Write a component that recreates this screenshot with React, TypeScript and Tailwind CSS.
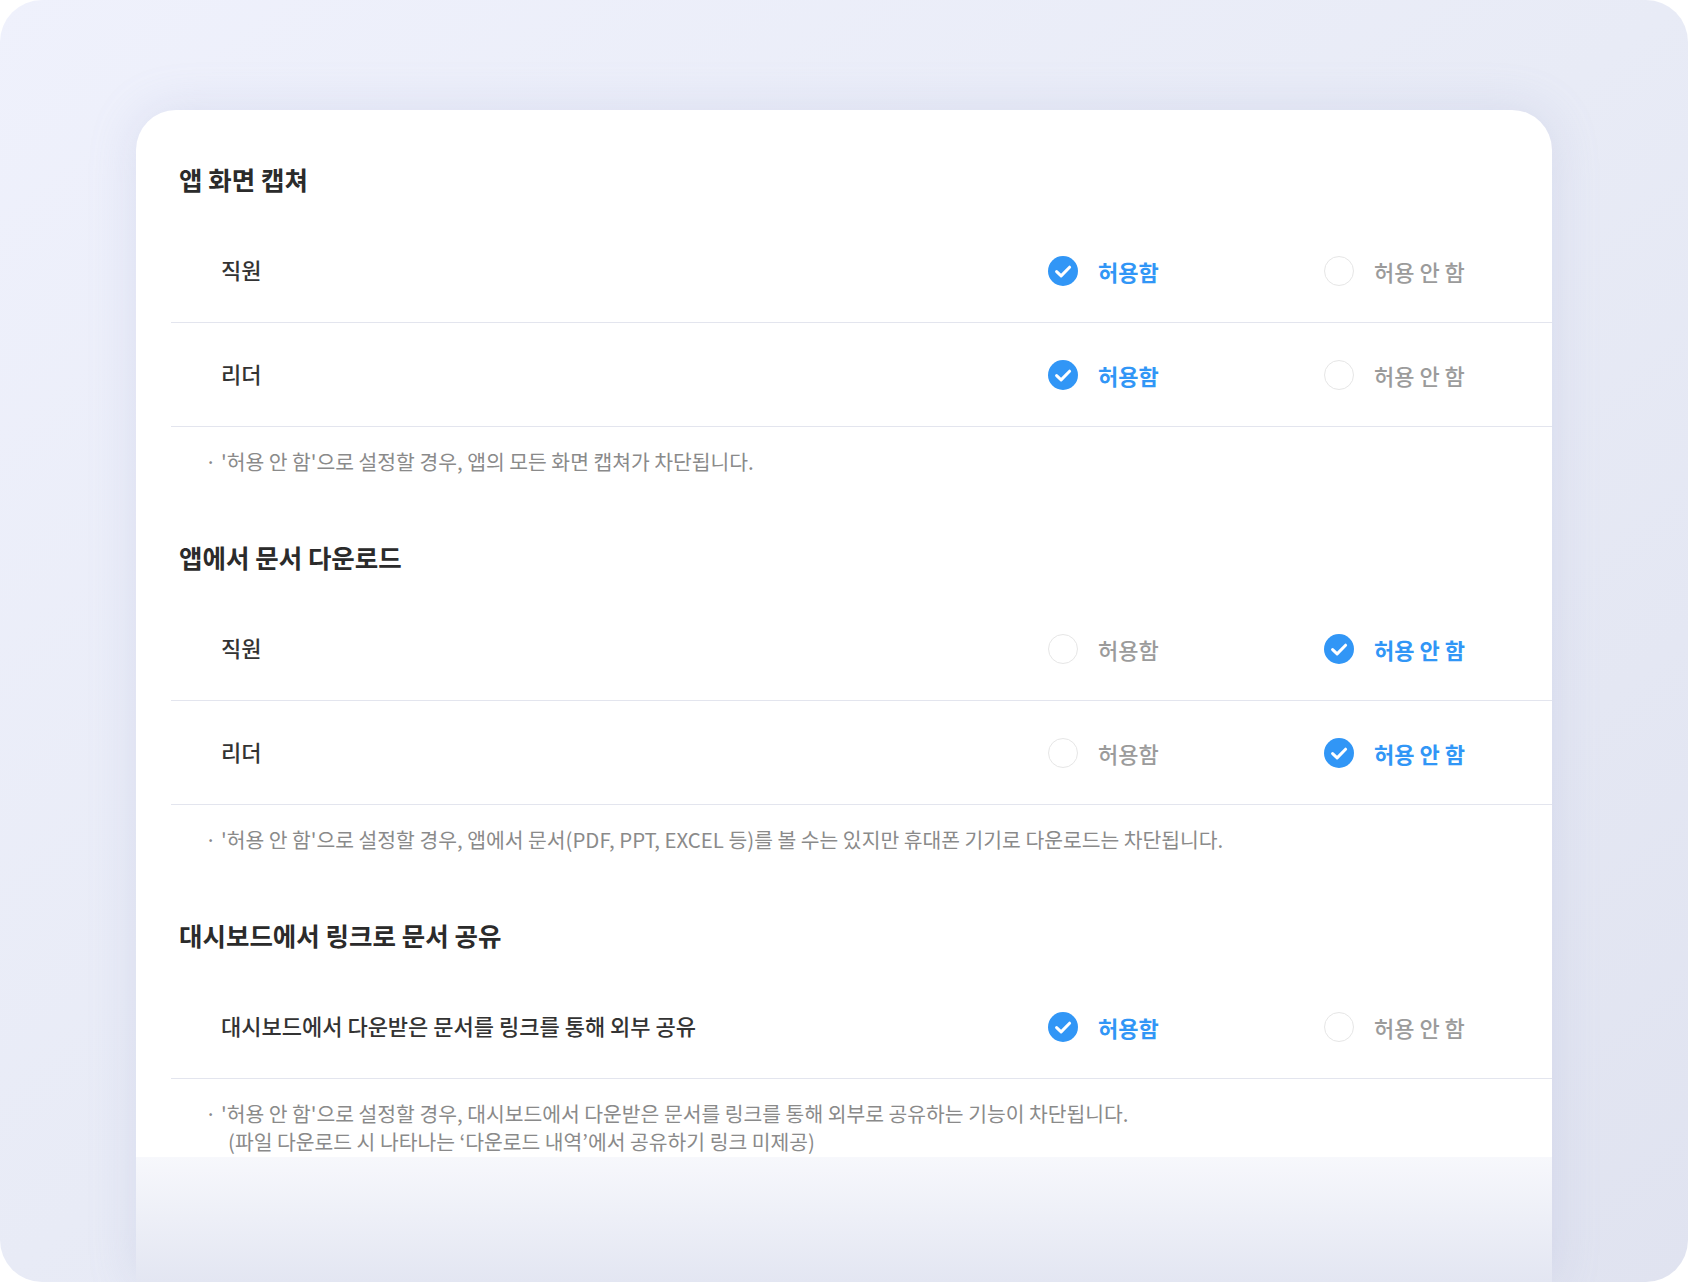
type Row = { label: string; allow: boolean };
type Section = { title: string; rows: Row[]; notes: string[] };

const sections: Section[] = [
  {
    title: '앱 화면 캡쳐',
    rows: [
      { label: '직원', allow: true },
      { label: '리더', allow: true },
    ],
    notes: ["· '허용 안 함'으로 설정할 경우, 앱의 모든 화면 캡쳐가 차단됩니다."],
  },
  {
    title: '앱에서 문서 다운로드',
    rows: [
      { label: '직원', allow: false },
      { label: '리더', allow: false },
    ],
    notes: [
      "· '허용 안 함'으로 설정할 경우, 앱에서 문서(PDF, PPT, EXCEL 등)를 볼 수는 있지만 휴대폰 기기로 다운로드는 차단됩니다.",
    ],
  },
  {
    title: '대시보드에서 링크로 문서 공유',
    rows: [{ label: '대시보드에서 다운받은 문서를 링크를 통해 외부 공유', allow: true }],
    notes: [
      "· '허용 안 함'으로 설정할 경우, 대시보드에서 다운받은 문서를 링크를 통해 외부로 공유하는 기능이 차단됩니다.",
      '(파일 다운로드 시 나타나는 ‘다운로드 내역’에서 공유하기 링크 미제공)',
    ],
  },
];

function RadioMark({ checked }: { checked: boolean }) {
  if (!checked) {
    return <span className="w-[30px] h-[30px] rounded-full border-[1.5px] border-[#e6e6e6] bg-white shrink-0" />;
  }
  return (
    <svg width="30" height="30" viewBox="0 0 30 30" className="shrink-0">
      <circle cx="15" cy="15" r="15" fill="#3196f6" />
      <path
        d="M8.6 15.6 L13.1 19.9 L21.6 11.2"
        fill="none"
        stroke="#ffffff"
        strokeWidth="3"
        strokeLinecap="round"
        strokeLinejoin="round"
      />
    </svg>
  );
}

function Option({ label, checked }: { label: string; checked: boolean }) {
  return (
    <div className="flex items-center gap-[20px]">
      <RadioMark checked={checked} />
      <span
        className={
          checked
            ? 'text-[22px] leading-[30px] font-bold text-[#3196f6]'
            : 'text-[22px] leading-[30px] font-medium text-[#9b9b9b]'
        }
      >
        {label}
      </span>
    </div>
  );
}

export default function App() {
  return (
    <div className="w-[1688px] h-[1282px] bg-white font-['Noto_Sans_CJK_KR','Noto_Sans',sans-serif]">
      <div className="h-full rounded-[42px] bg-linear-to-br from-[#eff1fc] via-[#e8ebf6] to-[#e0e3f0] overflow-hidden px-[136px] pt-[110px]">
        <div className="relative h-full rounded-t-[40px] bg-white shadow-[0_0_48px_rgba(150,160,205,0.22)] overflow-hidden pl-[35px] pt-[53px]">
          {sections.map((section, i) => (
            <section key={i} className="mb-[66px]">
              <h2 className="ml-[8px] text-[25.5px] leading-[32px] font-bold text-[#2b2b2b]">
                {section.title}
              </h2>

              <div className="mt-[24px]">
                {section.rows.map((row, j) => (
                  <div
                    key={j}
                    className="h-[104px] border-b border-[#e3e5ee] flex items-center pl-[50px] pr-[48px]"
                  >
                    <div className="flex-1 pb-[4px] text-[22px] leading-[30px] font-medium text-[#333333]">
                      {row.label}
                    </div>
                    <div className="w-[276px]">
                      <Option label="허용함" checked={row.allow} />
                    </div>
                    <div className="w-[180px]">
                      <Option label="허용 안 함" checked={!row.allow} />
                    </div>
                  </div>
                ))}
              </div>

              {/* notes under each block */}
              <div className="mt-[20px] pl-[34px] text-[20.4px] leading-[28px] text-[#8a8a8a]">
                {section.notes.map((note, k) => (
                  <p key={k} className={k > 0 ? 'pl-[23px]' : ''}>
                    {note}
                  </p>
                ))}
              </div>
            </section>
          ))}

          {/* soft fade at the bottom of the card */}
          <div className="absolute bottom-0 left-0 right-0 h-[125px] bg-linear-to-b from-[#f7f8fc] to-[#e3e6f2]" />
        </div>
      </div>
    </div>
  );
}
